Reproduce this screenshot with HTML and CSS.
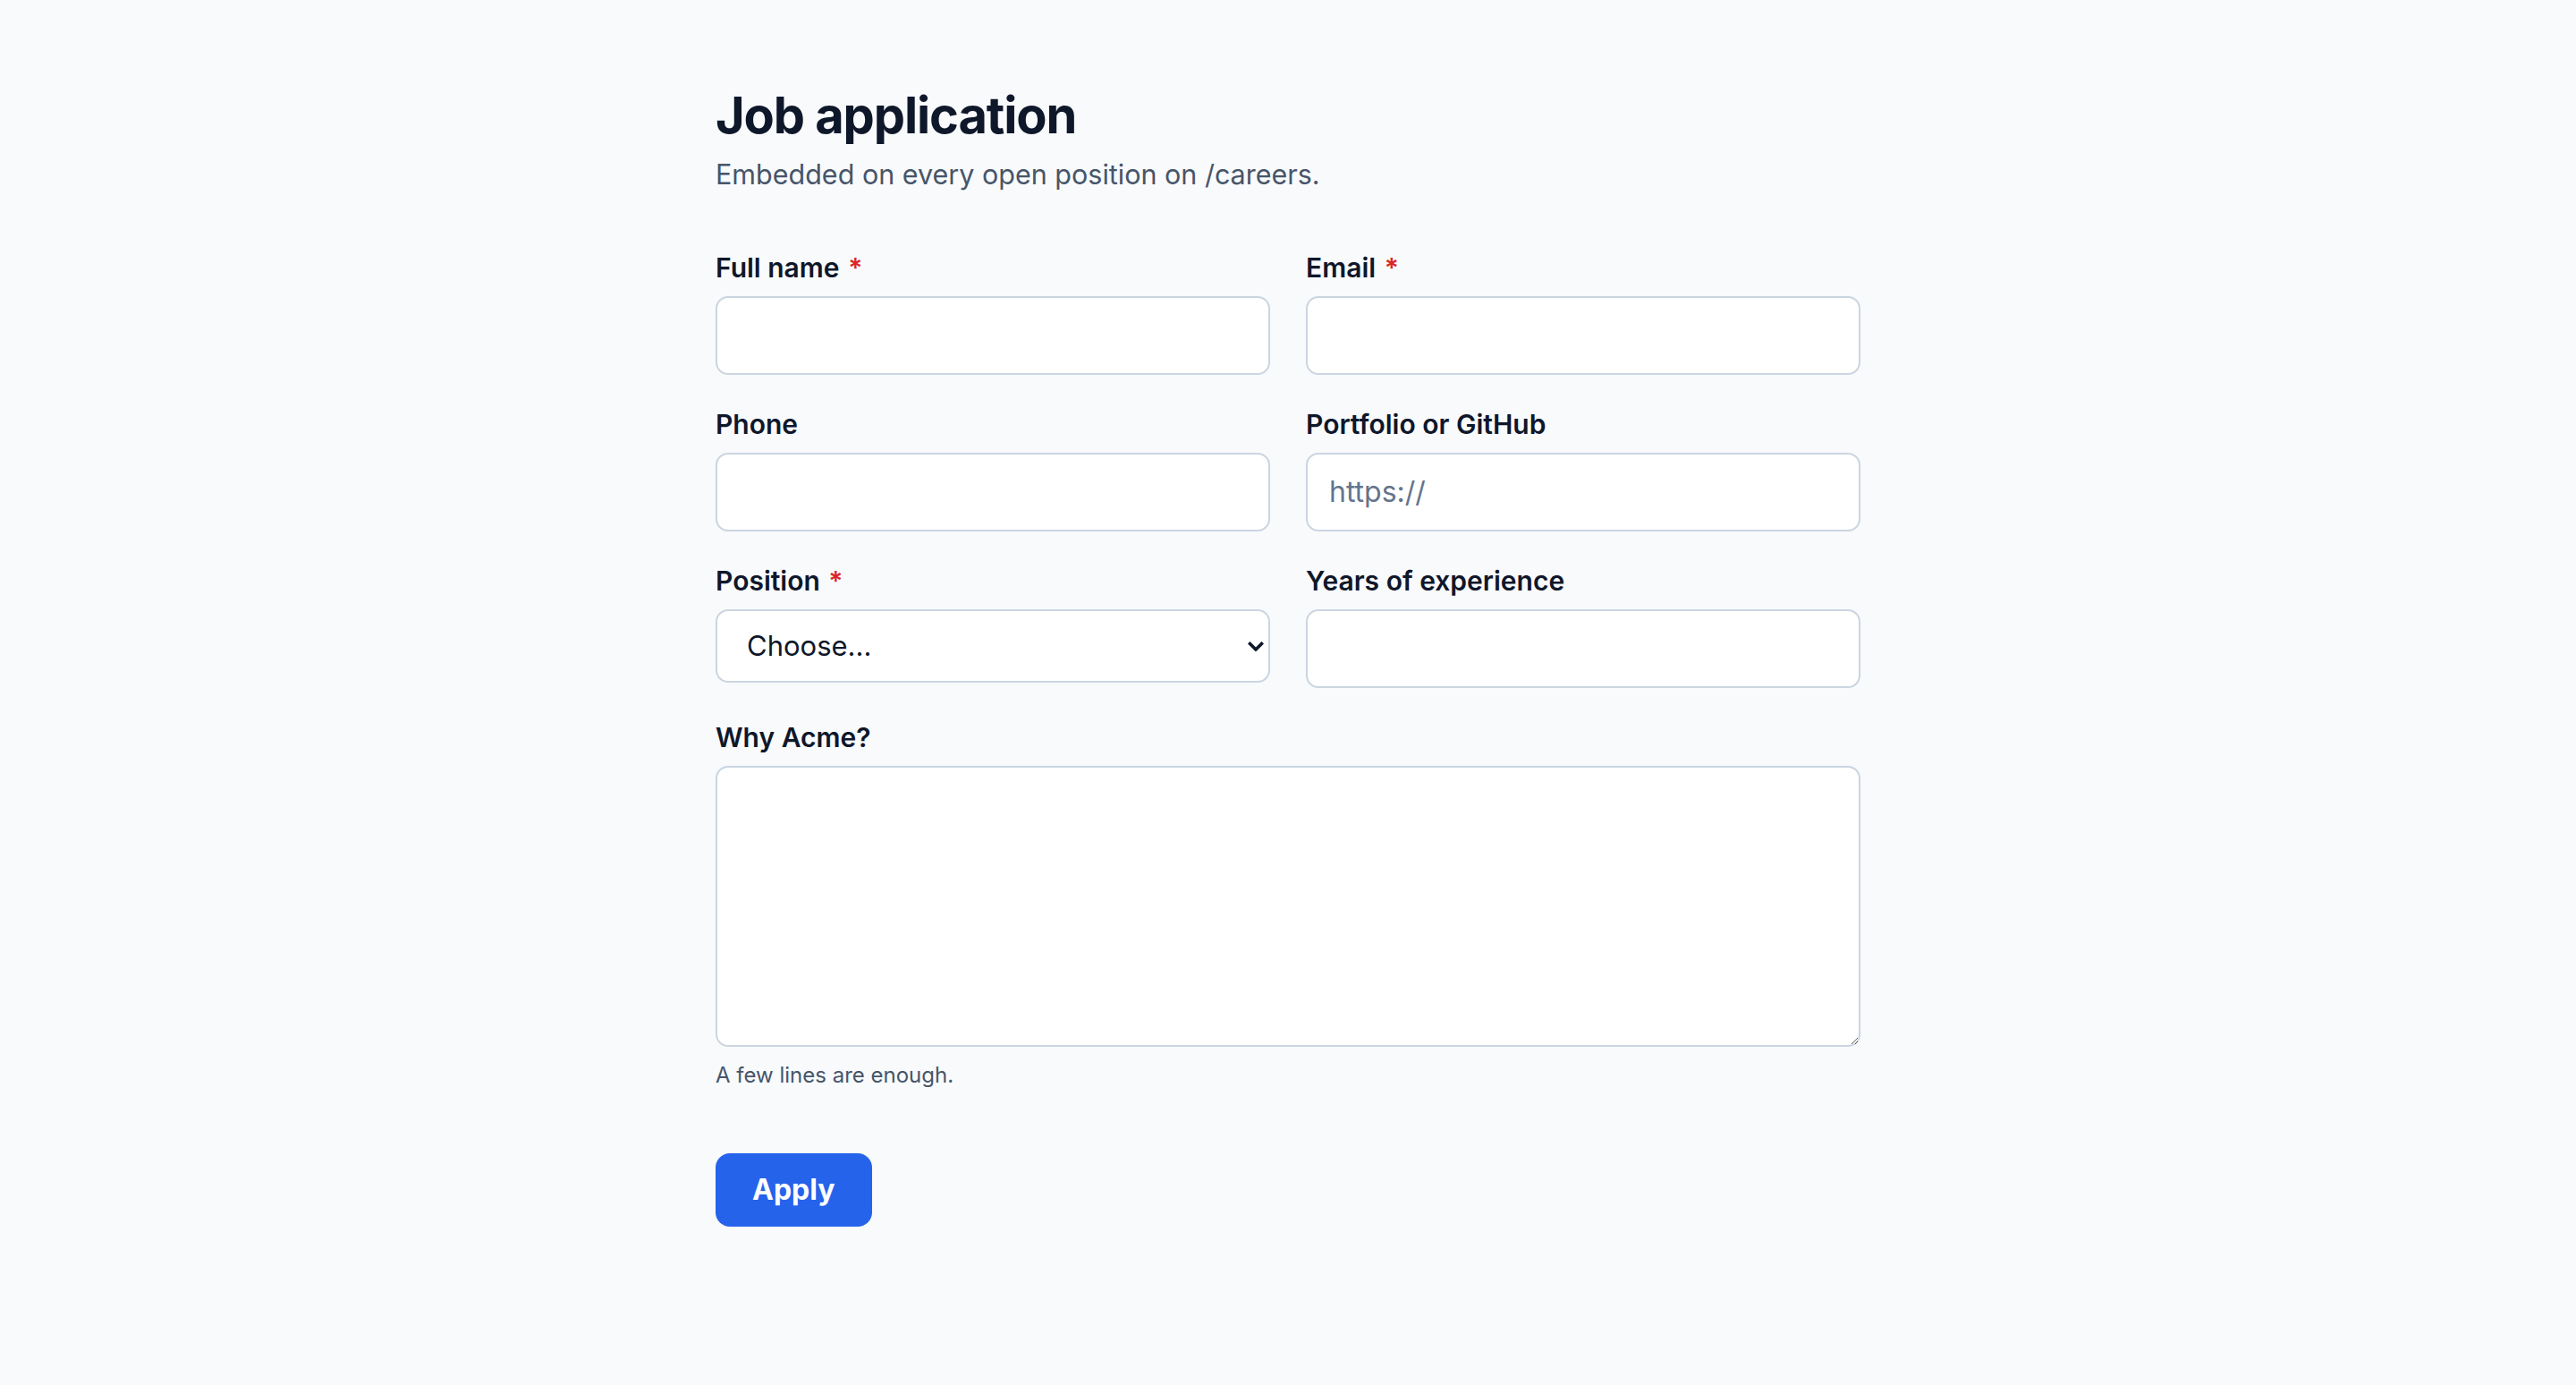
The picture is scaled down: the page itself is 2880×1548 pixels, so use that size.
FILE: index.html
```html
<!DOCTYPE html>
<html lang="en">
<head>
  <meta charset="UTF-8" />
  <meta name="viewport" content="width=device-width, initial-scale=1.0"/>
  <title>Job application</title>
  <link rel="stylesheet" href="styles.css">
</head>
<body>

  <main class="page">
    <h1 class="title">Job application</h1>
    <p class="subtitle">Embedded on every open position on /careers.</p>

    <form class="form">
      <div class="field">
        <label class="label" for="name">Full name <span class="req">*</span></label>
        <input class="input" id="name" type="text">
      </div>
      <div class="field">
        <label class="label" for="email">Email <span class="req">*</span></label>
        <input class="input" id="email" type="email">
      </div>
      <div class="field">
        <label class="label" for="phone">Phone</label>
        <input class="input" id="phone" type="tel">
      </div>
      <div class="field">
        <label class="label" for="portfolio">Portfolio or GitHub</label>
        <input class="input" id="portfolio" type="url" placeholder="https://">
      </div>
      <div class="field">
        <label class="label" for="position">Position <span class="req">*</span></label>
        <div class="select-wrap">
          <select class="input select" id="position">
            <option>Choose...</option>
          </select>
          <!-- dropdown chevron -->
          <svg class="chevron" width="18" height="11" viewBox="0 0 18 11" aria-hidden="true">
            <path d="M2.5 2.5 L9 9 L15.5 2.5" fill="none" stroke="#0f172a" stroke-width="3.6" stroke-linecap="square"/>
          </svg>
        </div>
      </div>
      <div class="field">
        <label class="label" for="years">Years of experience</label>
        <input class="input" id="years" type="number">
      </div>
      <div class="field wide">
        <label class="label" for="why">Why Acme?</label>
        <textarea class="input textarea" id="why"></textarea>
        <p class="hint">A few lines are enough.</p>
      </div>
      <div class="actions">
        <button class="btn" type="button">Apply</button>
      </div>
    </form>
  </main>

</body>
</html>
```

FILE: styles.css
```css
* {
  margin: 0;
  padding: 0;
  box-sizing: border-box;
}

body {
  background: #f8fafc;
  font-family: Inter, "Noto Sans", sans-serif;
  color: #0f172a;
}

.page {
  max-width: 1280px;
  margin: 0 auto;
  padding: 96px 0;
}

.title {
  font-size: 56px;
  font-weight: 700;
  line-height: 1.2;
  letter-spacing: -0.02em;
  color: #0f172a;
}

.subtitle {
  margin-top: 8px;
  font-size: 30.5px;
  line-height: 48px;
  color: #475569;
}

.form {
  margin-top: 60px;
  display: grid;
  grid-template-columns: 1fr 1fr;
  column-gap: 40px;
  row-gap: 35px;
}

.field {
  display: flex;
  flex-direction: column;
}

.wide {
  grid-column: 1 / -1;
}

.label {
  font-size: 30px;
  font-weight: 600;
  line-height: 40px;
  margin-bottom: 12px;
  color: #0f172a;
}

.req {
  color: #dc2626;
  margin-left: 2px;
}

.input {
  font-family: inherit;
  font-size: 32px;
  line-height: 42px;
  color: #0f172a;
  background: #fff;
  border: 2px solid #cbd5e1;
  border-radius: 14px;
  padding: 21px 24px;
  width: 100%;
}

.input::placeholder {
  color: #64748b;
}

.select-wrap {
  position: relative;
}

.select {
  appearance: none;
  -webkit-appearance: none;
  font-size: 31px;
  padding: 18px 48px 18px 33px;
  height: 82px;
}

.chevron {
  position: absolute;
  right: 7px;
  top: 36px;
  pointer-events: none;
}

.textarea {
  height: 314px;
  resize: vertical;
}

.hint {
  margin-top: 15px;
  font-size: 24px;
  line-height: 34px;
  color: #475569;
}

.actions {
  grid-column: 1 / -1;
  margin-top: 35px;
}

.btn {
  font-family: inherit;
  font-size: 32px;
  font-weight: 700;
  line-height: 42px;
  color: #fff;
  background: #2563eb;
  border: none;
  border-radius: 16px;
  padding: 20px 41px;
  cursor: pointer;
}
```
